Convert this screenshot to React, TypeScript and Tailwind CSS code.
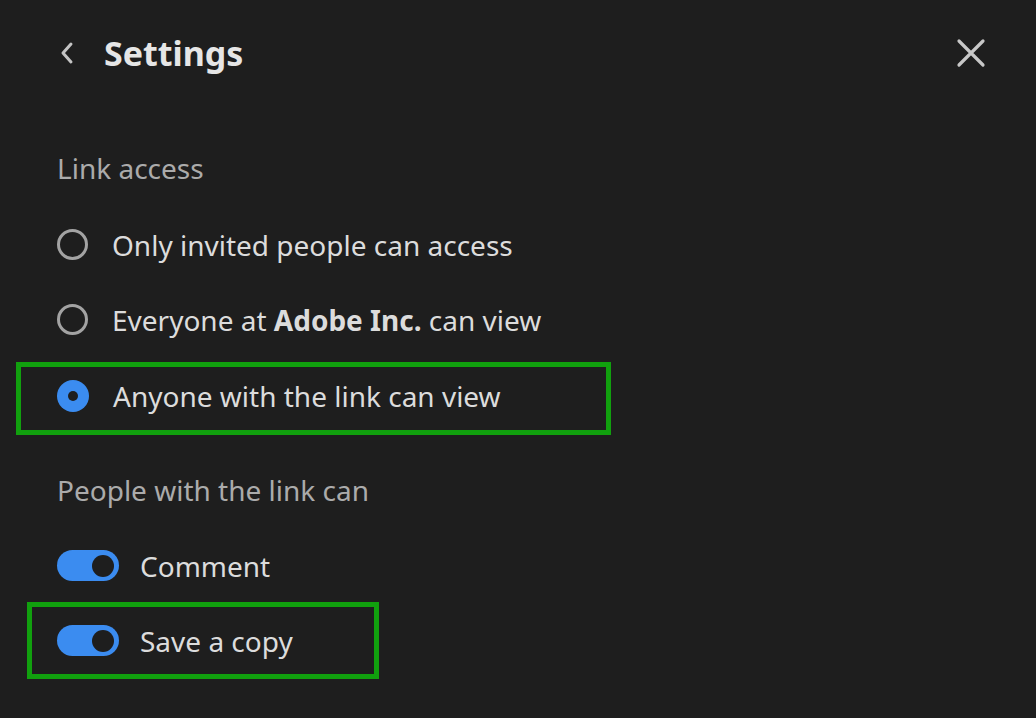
import React from "react";

const font = { fontFamily: '"Noto Sans", "Open Sans", sans-serif' };

function Radio({ checked }: { checked?: boolean }) {
  if (checked) {
    return (
      <span className="flex h-[32px] w-[32px] shrink-0 items-center justify-center rounded-full bg-[#3b8cf0]">
        <span className="h-[10px] w-[10px] rounded-full bg-[#1e1e1e]" />
      </span>
    );
  }
  return <span className="h-[31px] w-[31px] shrink-0 rounded-full border-[3px] border-[#a3a3a3]" />;
}

function Toggle() {
  return (
    <span className="flex h-[31px] w-[62px] shrink-0 items-center justify-end rounded-full bg-[#3b8cf0] pr-[5px]">
      <span className="h-[22px] w-[22px] rounded-full bg-[#1e1e1e]" />
    </span>
  );
}

export default function App() {
  return (
    <div
      className="h-[718px] w-[1036px] overflow-hidden bg-[#1e1e1e] text-[#dcdcdc]"
      style={font}
    >
      <div className="flex h-[106px] items-center pl-[58px] pr-[50px]">
        <svg width="18" height="26" viewBox="0 0 18 26" className="shrink-0">
          <path d="M13 4 L5 13 L13 22" fill="none" stroke="#c4c4c4" strokeWidth="3" strokeLinecap="round" strokeLinejoin="round" />
        </svg>
        <span className="ml-[28px] text-[34px] font-bold leading-none text-[#e6e6e6]">Settings</span>
        <div className="flex-1" />
        <svg width="30" height="30" viewBox="0 0 30 30" className="shrink-0">
          <path d="M3 3 L27 27 M27 3 L3 27" fill="none" stroke="#c8c8c8" strokeWidth="3.2" strokeLinecap="round" />
        </svg>
      </div>

      <div className="flex flex-col pl-[57px]">
        <div className="mt-[44px] h-[36px] text-[28px] leading-[36px] text-[#ababab]">Link access</div>

        <div className="mt-[21px] flex h-[75px] items-center gap-[24px] text-[28px]">
          <Radio />
          <span>Only invited people can access</span>
        </div>
        <div className="flex h-[75px] items-center gap-[24px] text-[28px]">
          <Radio />
          <span>
            Everyone at <span className="font-bold">Adobe Inc.</span> can view
          </span>
        </div>
        <div className="-ml-[41px] mt-[5px] flex h-[73px] w-[595px] items-center gap-[24px] border-[5px] border-[#11a00e] pb-[6px] pl-[36px] text-[28px]">
          <Radio checked />
          <span>Anyone with the link can view</span>
        </div>

        <div className="mt-[37px] h-[36px] text-[28px] leading-[36px] text-[#ababab]">People with the link can</div>

        <div className="mt-[21px] flex h-[73px] items-center gap-[21px] text-[28px]">
          <Toggle />
          <span>Comment</span>
        </div>
        <div className="-ml-[30px] flex h-[77px] w-[352px] items-center gap-[21px] border-[5px] border-[#11a00e] pl-[25px] text-[28px]">
          <Toggle />
          <span>Save a copy</span>
        </div>
      </div>
    </div>
  );
}
